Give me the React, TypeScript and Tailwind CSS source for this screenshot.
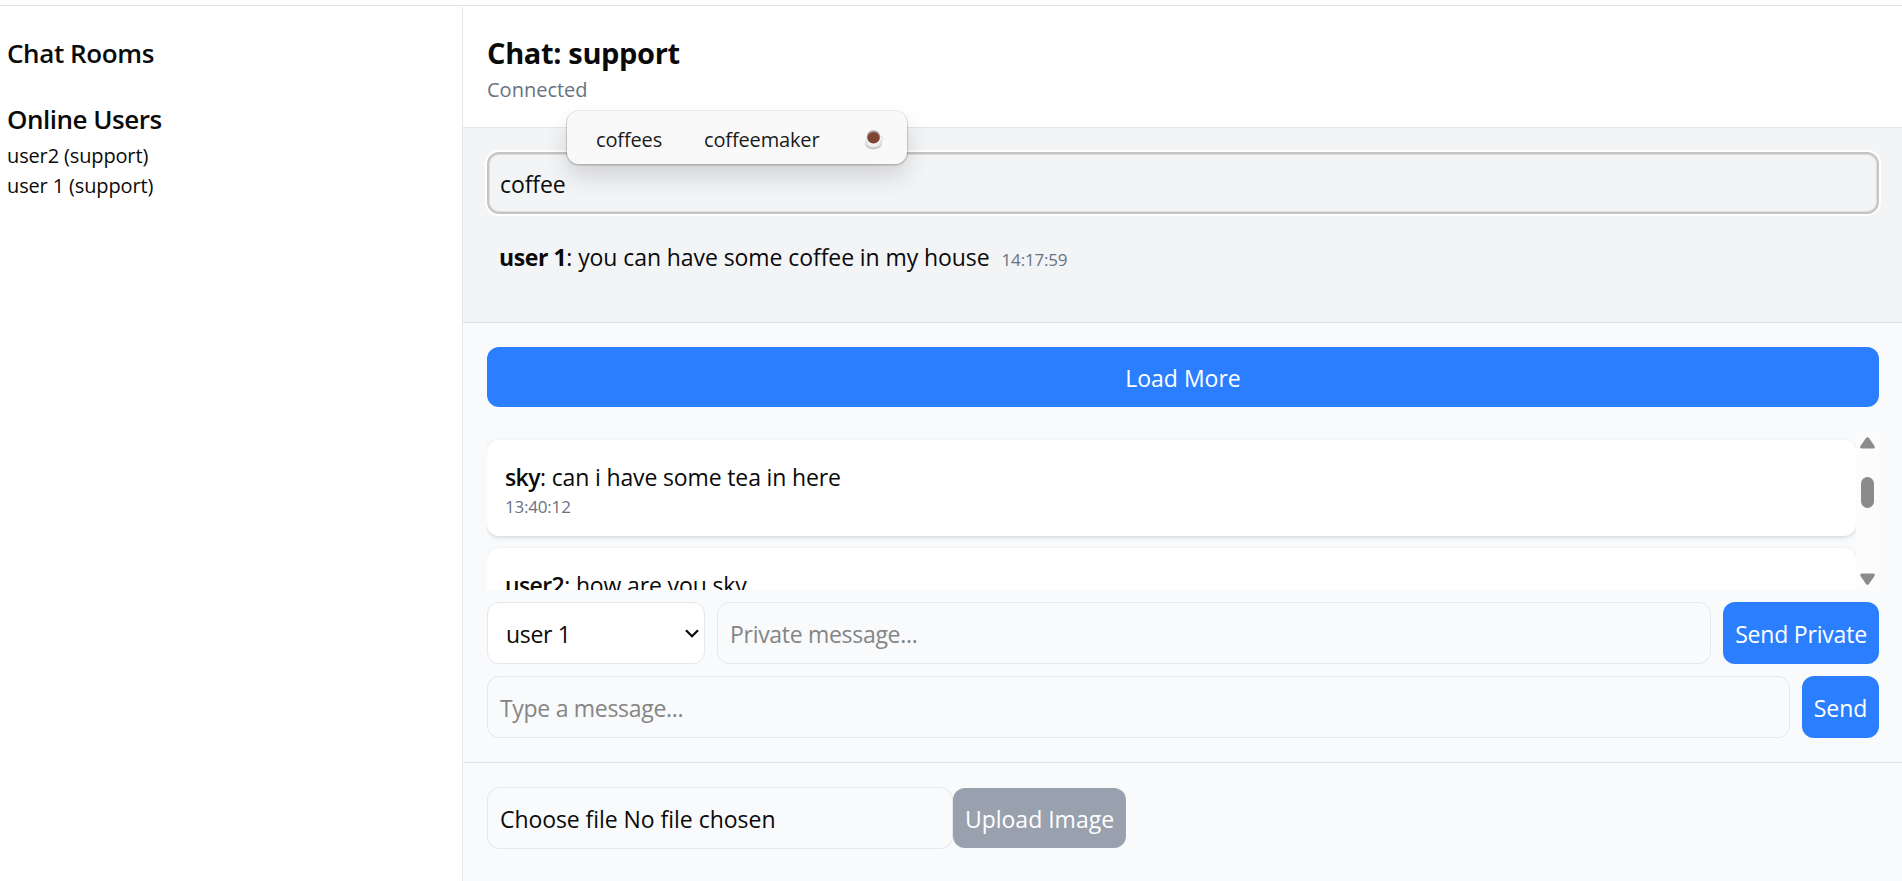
const onlineUsers = [
  { name: "user2", room: "support" },
  { name: "user 1", room: "support" },
];

const field =
  "h-[62px] rounded-[12px] border border-[#e5e7eb] bg-transparent px-[12px] pt-[2px] text-[23px] leading-[36px] tracking-[-0.3px] text-[#0a0a0a] outline-none placeholder:text-[#858585] placeholder:opacity-100";
const button =
  "flex shrink-0 items-center justify-center rounded-[12px] bg-[#2b7fff] pt-[2px] text-[23px] leading-[36px] text-white";

function Sidebar() {
  return (
    <aside className="w-[463px] shrink-0 border-r border-[#e5e7eb] bg-white pl-[7px] pt-[25px]">
      <h2 className="text-[26px] font-semibold leading-[42px] tracking-[-0.4px]">Chat Rooms</h2>
      <h2 className="mt-[24px] text-[26px] font-semibold leading-[42px] tracking-[-0.5px]">Online Users</h2>
      <ul className="pt-px text-[20px] leading-[30px] tracking-[-0.14px]">
        {onlineUsers.map((u) => (
          <li key={u.name}>
            {u.name} ({u.room})
          </li>
        ))}
      </ul>
    </aside>
  );
}

function Suggestions() {
  return (
    <div className="absolute left-[567px] top-[111px] flex h-[53px] w-[340px] items-center rounded-[12px] bg-[#f9f9f9] pt-[4px] text-[20px] leading-[30px] text-[#1b1b1b] shadow-[0_0_0_1px_rgba(0,0,0,0.06),0_1px_1px_1px_rgba(0,0,0,0.12),0_12px_24px_rgba(0,0,0,0.14)]">
      <span className="ml-[29px] w-[108px] tracking-[-0.15px]">coffees</span>
      <span className="w-[160px] tracking-[-0.15px]">coffeemaker</span>
      <svg width="20" height="22" viewBox="0 0 20 22" className="mt-[1px]">
        <ellipse cx="9.5" cy="15" rx="8.4" ry="5.4" fill="#c6c6c6" />
        <ellipse cx="9.5" cy="13.4" rx="8.8" ry="5.2" fill="#e2e2e2" />
        <circle cx="16.2" cy="9.5" r="2.3" fill="none" stroke="#e6e6e6" strokeWidth="1.3" />
        <path d="M2.5 8c0 6 2 9.5 7 9.5s7-3.500 7-9.500z" fill="#f2f2f2" />
        <ellipse cx="9.500" cy="7.700" rx="6.700" ry="6.500" fill="#aaa6a4" />
        <ellipse cx="9.500" cy="8.700" rx="6.100" ry="5.700" fill="#804432" />
      </svg>
    </div>
  );
}

function Scrollbar() {
  return (
    <div className="flex w-[23px] shrink-0 flex-col items-center bg-[#fcfcfc] pb-[5px] pt-[6px]">
      <svg width="15" height="12" viewBox="0 0 15 12" fill="#8b8b8b">
        <path d="M6 1Q7.5-.7 9 1l5.5 8q1 2.400-1.300 2.600H1.800Q-.5 11.400.5 9z" />
      </svg>
      <div className="mt-[28px] h-[31px] w-[13px] rounded-full bg-[#8b8b8b]" />
      <svg width="15" height="12" viewBox="0 0 15 12" fill="#8b8b8b" className="mt-auto">
        <path d="M6 11Q7.5 12.7 9 11l5.5-8q1-2.400-1.300-2.600H1.800Q-.5.6.5 3z" />
      </svg>
    </div>
  );
}

function Message({ user, text, time }: { user: string; text: string; time?: string }) {
  return (
    <div className="h-[96px] shrink-0 rounded-[12px] bg-white px-[18px] pt-[19px] shadow-[0_1.5px_4.5px_rgba(0,0,0,0.1),0_1.5px_3px_-1.5px_rgba(0,0,0,0.1)]">
      <div className="text-[23px] leading-[36px] tracking-[-0.14px]">
        <span className="font-semibold tracking-[-0.6px]">{user}</span>: {text}
      </div>
      {time && <div className="text-[17px] leading-[24px] tracking-[-0.2px] text-[#6a7282]">{time}</div>}
    </div>
  );
}

export default function App() {
  return (
    <div className="relative flex h-[881px] flex-col overflow-hidden bg-white font-['Open_Sans','Noto_Sans',sans-serif] text-[#0a0a0a]">
      <div className="h-[7px] shrink-0 pt-[5px]">
        <div className="h-px bg-[#e2e2e2]" />
      </div>
      <div className="flex min-h-0 flex-1">
        <Sidebar />
        <main className="flex min-w-0 flex-1 flex-col bg-[#f9fafb]">
          <header className="h-[121px] shrink-0 border-b border-[#e5e7eb] bg-white px-[24px] pt-[23px]">
            <h1 className="text-[29px] font-bold leading-[45px] tracking-[-0.35px]">Chat: support</h1>
            <p className="pt-px text-[20px] leading-[27px] text-[#6a7282]">Connected</p>
          </header>

          <section className="h-[195px] shrink-0 border-b border-[#dfe1e4] bg-[#f3f4f6] px-[24px] pt-[24px]">
            <input
              defaultValue="coffee"
              className="block h-[62px] w-[1392px] rounded-[12px] border-2 border-[#c5c5c5] px-[11px] pt-[2px] text-[23px] leading-[36px] tracking-[-0.1px] shadow-[0_0_0_2px_#ffffff,inset_0_0_0_1px_#dcdddf] outline-none"
            />
            <div className="mt-[24px] pl-[12px] pt-px text-[23px] leading-[36px]">
              <span className="font-bold tracking-[-0.4px]">user 1</span>
              <span className="tracking-[-0.08px]">: you can have some coffee in my house</span>
              <span className="ml-[12px] text-[17px] tracking-[-0.2px] text-[#6a7282]">14:17:59</span>
            </div>
          </section>

          <section className="flex h-[440px] shrink-0 flex-col border-b border-[#e2e4e7] px-[24px] pt-[24px]">
            <button className={`${button} h-[60px] w-[1392px]`}>Load More</button>
            <div className="mt-[24px] flex h-[159px] w-[1392px] shrink-0">
              <div className="flex flex-1 flex-col gap-[12px] overflow-hidden pt-[9px]">
                <Message user="sky" text="can i have some tea in here" time="13:40:12" />
                <Message user="user2" text="how are you sky" />
              </div>
              <Scrollbar />
            </div>
            <div className="mt-[12px] flex w-[1392px] gap-[12px]">
              <div className="flex h-[62px] w-[218px] shrink-0 items-center justify-between rounded-[12px] border border-[#e5e7eb] bg-white pl-[18px] pr-[5px] pt-[2px] text-[23px] leading-[36px] tracking-[-0.3px]">
                user 1
                <svg width="14" height="10" viewBox="0 0 14 10" fill="none" stroke="#0a0a0a" strokeWidth="2.2">
                  <path d="M1 1.2l6 6 6-6" />
                </svg>
              </div>
              <input placeholder="Private message..." className={`${field} min-w-0 flex-1`} />
              <button className={`${button} h-[62px] w-[156px] tracking-[-0.2px]`}>Send Private</button>
            </div>
            <div className="mt-[12px] flex w-[1392px] gap-[12px]">
              <input placeholder="Type a message..." className={`${field} min-w-0 flex-1`} />
              <button className={`${button} h-[62px] w-[77px]`}>Send</button>
            </div>
          </section>

          <section className="flex items-center px-[24px] pt-[24px]">
            <label className={`${field} flex w-[466px] items-center gap-[6px]`}>
              <span className="tracking-[-0.08px]">Choose file</span>
              <span className="tracking-[-0.02px]">No file chosen</span>
            </label>
            <button className="flex h-[60px] w-[173px] items-center justify-center rounded-[12px] bg-[#99a1af] pt-[2px] text-[23px] leading-[36px] text-white">
              Upload Image
            </button>
          </section>
        </main>
      </div>
      <Suggestions />
    </div>
  );
}
